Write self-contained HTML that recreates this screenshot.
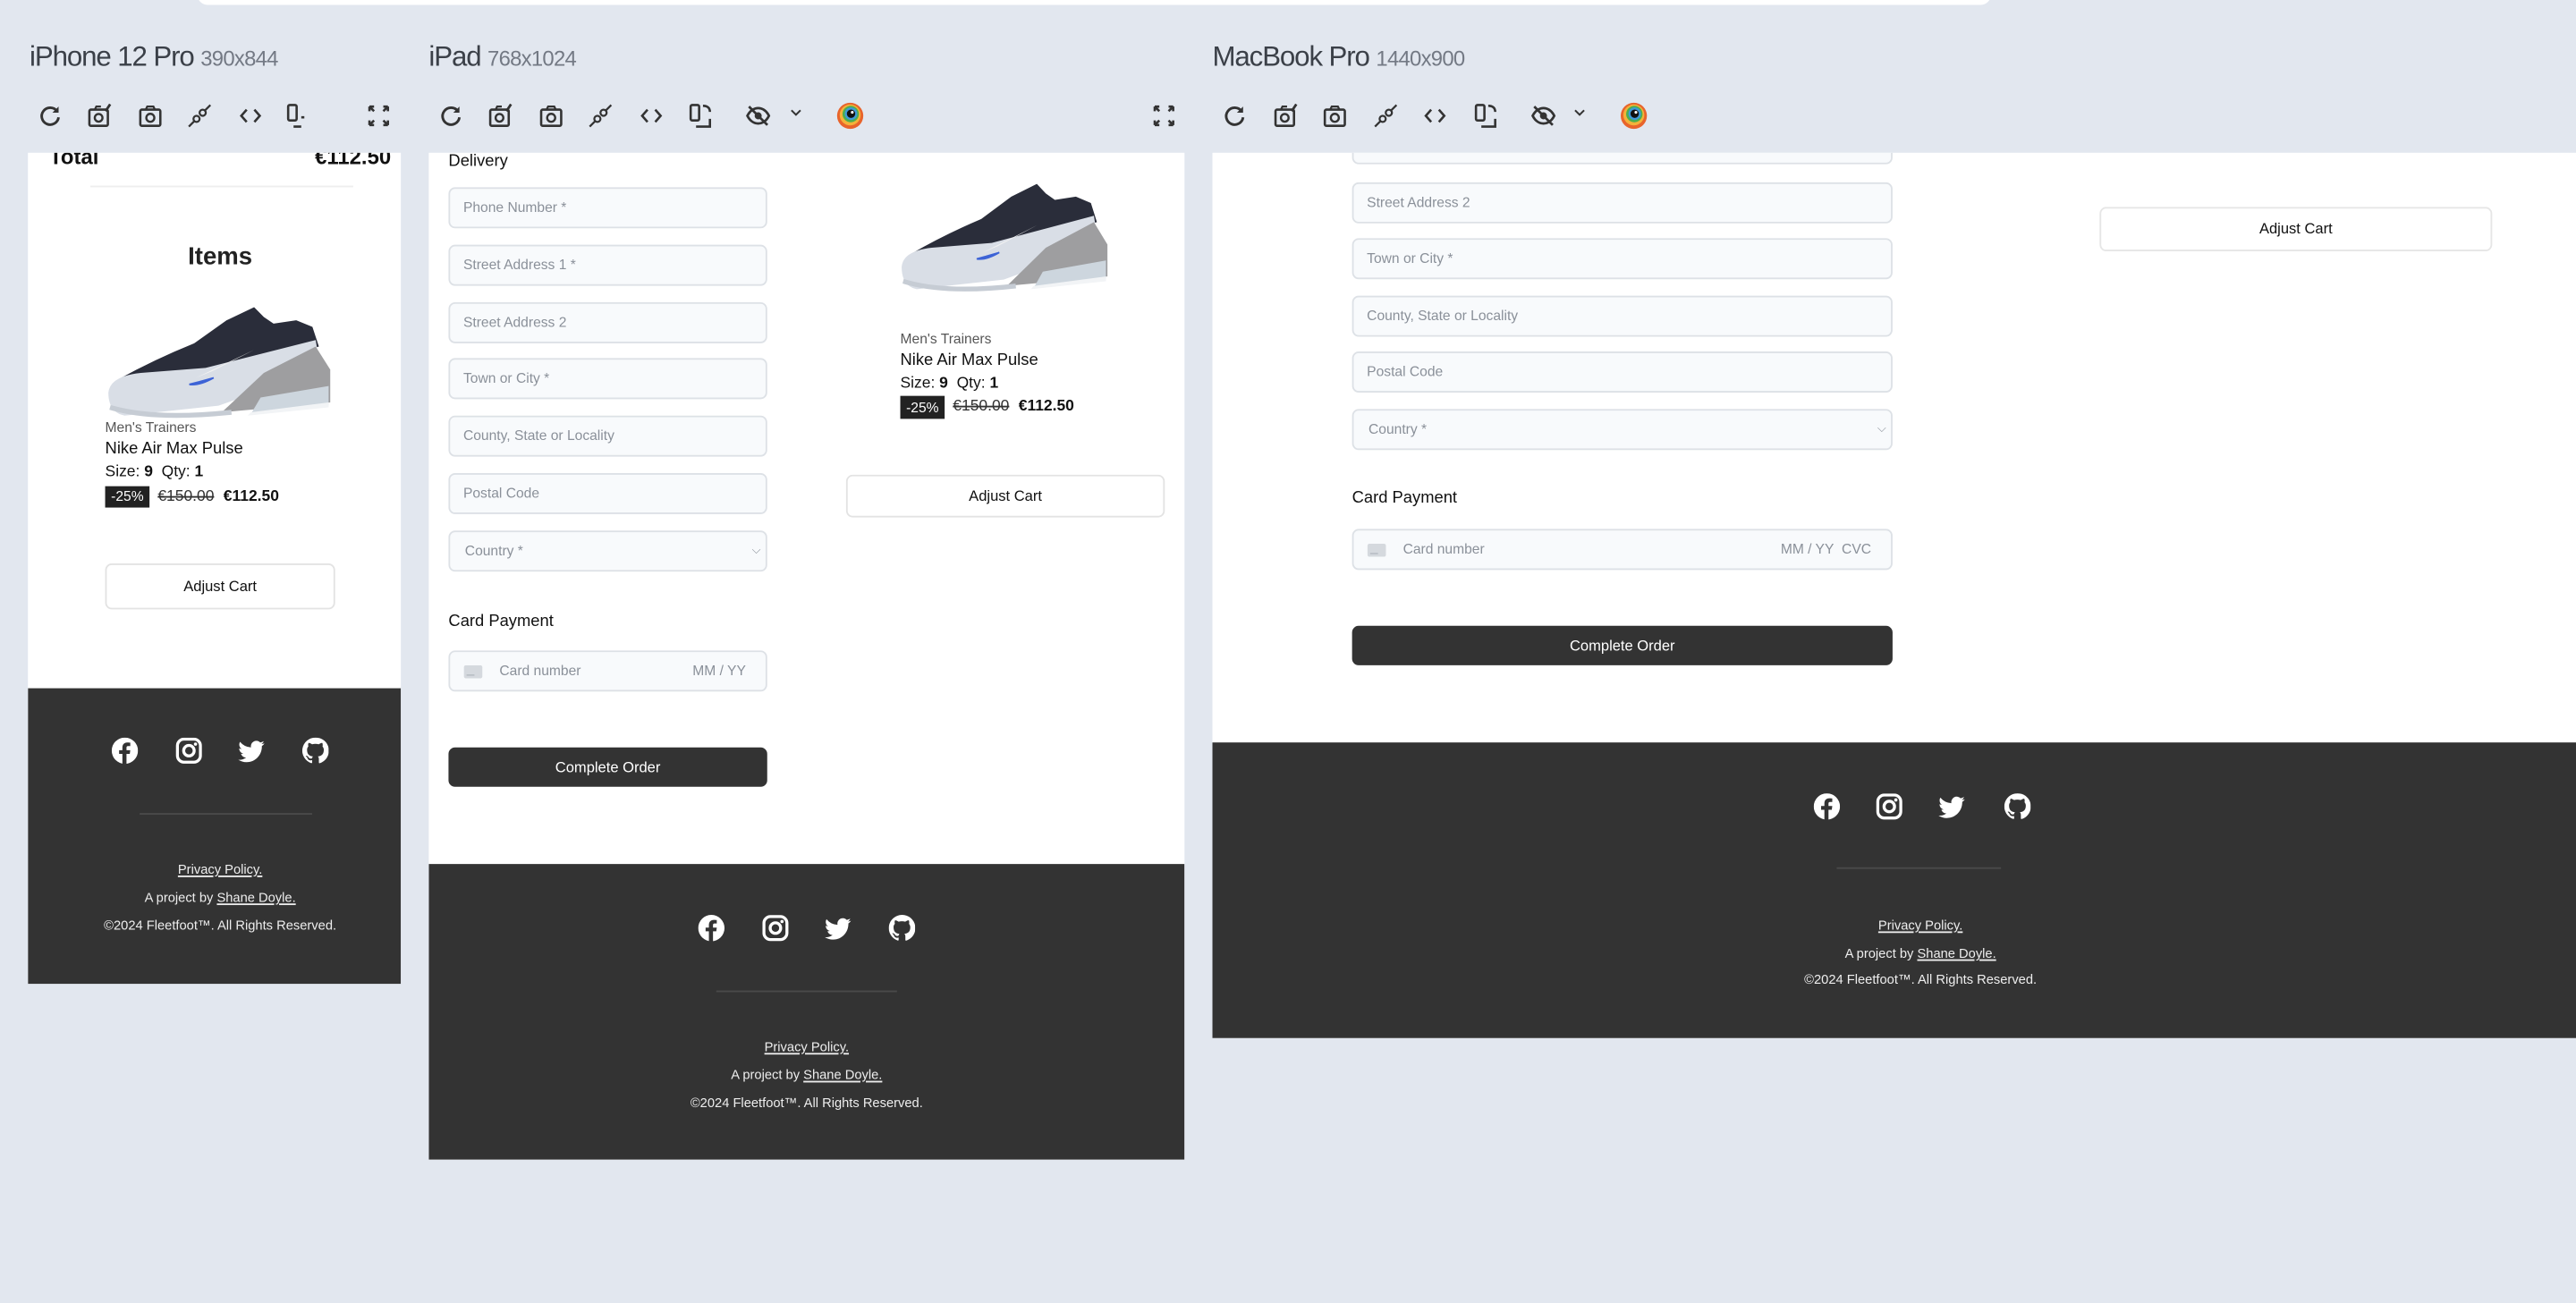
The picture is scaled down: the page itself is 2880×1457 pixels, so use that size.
<!DOCTYPE html>
<html><head><meta charset="utf-8">
<style>
*{margin:0;padding:0;box-sizing:border-box}
html,body{width:2880px;height:1456px;overflow:hidden;background:#e2e7ef}
#s{position:absolute;left:0;top:0;width:1568px;height:793px;transform:scale(1.836735);transform-origin:0 0;font-family:"Liberation Sans",sans-serif}
.a{position:absolute}
.t{font-size:17px;color:#3b4048;letter-spacing:-0.6px;white-space:nowrap}
.t span{font-size:13px;color:#737984;letter-spacing:-0.4px}
.ic{position:absolute;width:15px;height:15px;top:62px}
.fr{position:absolute;background:#fff;overflow:hidden}
.ft{position:absolute;left:0;right:0;bottom:0;background:#333}
.in{position:absolute;height:25px;border:1px solid #dde1e6;border-radius:4px;background:#f8fafc;font-size:8.5px;color:#8a9099;padding-left:8px;line-height:23px}
.btn{position:absolute;border-radius:4px;font-size:9px;text-align:center}
.lbl{position:absolute;font-size:10px;color:#111}
.ftx{position:absolute;width:200px;text-align:center;font-size:8px;color:#eee}
.ftx u{text-decoration:underline}
.fi{position:absolute;width:16px;height:16px}
.line{position:absolute;height:1px;background:#4a4a4a}
</style></head><body>
<svg width="0" height="0" style="position:absolute">
<defs>
<symbol id="rel" viewBox="0 0 16 16"><path d="M12.5 5A5.5 5.5 0 1 0 13.5 9" fill="none" stroke="#333" stroke-width="1.7"/><path d="M13.5 2v4h-4z" fill="#333"/></symbol>
<symbol id="cam2" viewBox="0 0 16 16"><rect x="1.5" y="4" width="12" height="10.5" rx="1" fill="none" stroke="#333" stroke-width="1.5"/><circle cx="7.5" cy="9.3" r="2.5" fill="none" stroke="#333" stroke-width="1.4"/><path d="M5 4l1-2h3" fill="none" stroke="#333" stroke-width="1.3"/><path d="M12 5L15 .5" stroke="#333" stroke-width="1.6"/></symbol>
<symbol id="cam" viewBox="0 0 16 16"><rect x="1.5" y="4" width="13" height="10.5" rx="1" fill="none" stroke="#333" stroke-width="1.5"/><circle cx="8" cy="9.3" r="2.6" fill="none" stroke="#333" stroke-width="1.4"/><path d="M5 4l1-2h4l1 2" fill="none" stroke="#333" stroke-width="1.3"/></symbol>
<symbol id="plug" viewBox="0 0 16 16"><path d="M1 15l4-4M15 1l-4 4" stroke="#333" stroke-width="1.3"/><circle cx="6" cy="10" r="2" fill="none" stroke="#333" stroke-width="1.3"/><circle cx="10" cy="6" r="2" fill="none" stroke="#333" stroke-width="1.3"/></symbol>
<symbol id="code" viewBox="0 0 16 16"><path d="M5.5 4L2 8l3.5 4M10.5 4L14 8l-3.5 4" fill="none" stroke="#333" stroke-width="1.5"/></symbol>
<symbol id="rot" viewBox="0 0 16 16"><rect x="1.5" y="1" width="5.5" height="10" rx="1" fill="none" stroke="#333" stroke-width="1.5"/><path d="M9.5 1.5c3 0 4.5 1.5 4.5 4M5 15h9v-5" fill="none" stroke="#333" stroke-width="1.5"/></symbol>
<symbol id="rot2" viewBox="0 0 16 16"><rect x="1.5" y="1" width="5.5" height="10" rx="1" fill="none" stroke="#333" stroke-width="1.5"/><path d="M5 15h5M10 9h2" fill="none" stroke="#333" stroke-width="1.5"/></symbol>
<symbol id="full" viewBox="0 0 16 16"><path d="M2 2h3M2 2v3M2 2l3 3M14 2h-3M14 2v3M14 2l-3 3M2 14h3M2 14v-3M2 14l3-3M14 14h-3M14 14v-3M14 14l-3-3" stroke="#333" stroke-width="1.5" fill="none"/></symbol>
<symbol id="eye" viewBox="0 0 16 16"><path d="M1 8c2-4 5-5 7-5s5 1 7 5c-2 4-5 5-7 5S3 12 1 8z" fill="none" stroke="#333" stroke-width="1.6"/><circle cx="8" cy="8" r="2.3" fill="#333"/><path d="M2 2l12 12" stroke="#333" stroke-width="1.6"/></symbol>
<symbol id="chev" viewBox="0 0 16 16"><path d="M4 6l4 4 4-4" fill="none" stroke="#333" stroke-width="1.6"/></symbol>
<symbol id="poly" viewBox="0 0 16 16"><circle cx="8" cy="8" r="7.5" fill="#e8642c"/><circle cx="8" cy="7.5" r="6" fill="#f3b23a"/><circle cx="8.3" cy="7" r="4.7" fill="#4cae4f"/><circle cx="8.5" cy="6.8" r="3.6" fill="#3e9ad8"/><circle cx="8.5" cy="6.8" r="2.4" fill="#111"/><circle cx="9.2" cy="6" r=".8" fill="#fff"/></symbol>
<symbol id="fb" viewBox="0 0 16 16"><circle cx="8" cy="8" r="8" fill="#fff"/><path d="M9 16V10h2l.3-2.3H9V6.3c0-.7.2-1.1 1.1-1.1h1.2V3.1c-.2 0-1-.1-1.8-.1-1.8 0-3 1.1-3 3.1v1.6H4.5V10h2v6z" fill="#333"/></symbol>
<symbol id="ig" viewBox="0 0 16 16"><rect x="1" y="1" width="14" height="14" rx="4" fill="none" stroke="#fff" stroke-width="1.8"/><circle cx="8" cy="8" r="3.2" fill="none" stroke="#fff" stroke-width="1.8"/><circle cx="12" cy="4" r="1" fill="#fff"/></symbol>
<symbol id="tw" viewBox="0 0 16 16"><path d="M16 3.5c-.6.3-1.2.4-1.9.5.7-.4 1.2-1 1.4-1.8-.6.4-1.3.6-2.1.8A3.3 3.3 0 0 0 7.8 6 9.3 9.3 0 0 1 1.1 2.6a3.3 3.3 0 0 0 1 4.4c-.5 0-1-.2-1.5-.4 0 1.600 1.1 2.9 2.6 3.2-.5.1-1 .2-1.5.1.4 1.3 1.6 2.3 3.1 2.3A6.6 6.6 0 0 1 0 13.5 9.3 9.3 0 0 0 5 15c6 0 9.4-5 9.4-9.4v-.4c.7-.5 1.2-1 1.6-1.7z" fill="#fff"/></symbol>
<symbol id="gh" viewBox="0 0 16 16"><path d="M8 0a8 8 0 0 0-2.5 15.6c.4 0 .5-.2.5-.4v-1.4c-2.200.5-2.7-1-2.7-1-.4-.9-.9-1.2-.9-1.2-.7-.5.1-.5.1-.5.8.1 1.2.8 1.2.8.7 1.3 1.900.9 2.300.7 0-.5.3-.9.5-1.1-1.8-.2-3.6-.9-3.6-4 0-.9.3-1.6.8-2.1 0-.2-.4-1 .1-2.1 0 0 .7-.2 2.2.8a7.5 7.5 0 0 1 4 0c1.5-1 2.2-.8 2.2-.8.4 1.1.2 1.9.1 2.1.5.6.8 1.3.8 2.1 0 3.1-1.9 3.8-3.6 4 .3.3.6.8.6 1.5v2.2c0 .2.1.5.6.4A8 8 0 0 0 8 0z" fill="#fff"/></symbol>
<symbol id="shoe" viewBox="0 0 140 70" preserveAspectRatio="none">
<path d="M8 46Q30 34 55 24L75 10 92 2 98 8 104 12 118 10 128 14 132 26 60 46z" fill="#2a2d3a"/>
<path d="M2 54Q3 44 22 42L62 39 130 22 133 40 70 62 12 68Q2 66 2 54z" fill="#d9dee6"/>
<path d="M72 66L98 42 130 26 139 40 139 60z" fill="#9e9ea0"/>
<path d="M96 57L138 50 138 62 90 67z" fill="#cdd6de"/>
<path d="M90 66L138 60 138 63 88 68z" fill="#f2f4f6"/>
<path d="M56 45L92 28 66 41z" fill="#f2f2f2"/>
<path d="M52 49Q58 50 67 45L58 47.5z" fill="#3d63d6" stroke="#3d63d6"/>
<path d="M3 63Q30 71 78 66" stroke="#c6ccd4" stroke-width="3" fill="none"/>
</symbol>
<symbol id="card" viewBox="0 0 14 10"><rect width="14" height="10" rx="1.5" fill="#d5d9de"/><rect x="2" y="7" width="6" height="1" fill="#b6bbc2"/></symbol>
</defs></svg>

<div id="s">
<div class="a" style="left:120px;top:-10px;width:1092px;height:13px;background:#fff;border-radius:8px"></div>

<div class="a t" style="left:18px;top:25px">iPhone 12 Pro <span>390x844</span></div>
<div class="a t" style="left:261px;top:25px">iPad <span>768x1024</span></div>
<div class="a t" style="left:738px;top:25px">MacBook Pro <span>1440x900</span></div>

<svg class="ic" style="left:23px;top:63px"><use href="#rel"/></svg>
<svg class="ic" style="left:53px;top:63px"><use href="#cam2"/></svg>
<svg class="ic" style="left:84px;top:63px"><use href="#cam"/></svg>
<svg class="ic" style="left:114px;top:63px"><use href="#plug"/></svg>
<svg class="ic" style="left:145px;top:63px"><use href="#code"/></svg>
<svg class="ic" style="left:174px;top:63px"><use href="#rot2"/></svg>
<svg class="ic" style="left:223px;top:63px"><use href="#full"/></svg>

<svg class="ic" style="left:267px;top:63px"><use href="#rel"/></svg>
<svg class="ic" style="left:297px;top:63px"><use href="#cam2"/></svg>
<svg class="ic" style="left:328px;top:63px"><use href="#cam"/></svg>
<svg class="ic" style="left:358px;top:63px"><use href="#plug"/></svg>
<svg class="ic" style="left:389px;top:63px"><use href="#code"/></svg>
<svg class="ic" style="left:419px;top:63px"><use href="#rot"/></svg>
<svg class="ic" style="left:454px;top:63px"><use href="#eye"/></svg>
<svg class="ic" style="left:479px;width:11px;height:11px;top:63px"><use href="#chev"/></svg>
<svg class="ic" style="left:509px;width:17px;height:17px;top:62px"><use href="#poly"/></svg>
<svg class="ic" style="left:701px;top:63px"><use href="#full"/></svg>

<svg class="ic" style="left:744px;top:63px"><use href="#rel"/></svg>
<svg class="ic" style="left:775px;top:63px"><use href="#cam2"/></svg>
<svg class="ic" style="left:805px;top:63px"><use href="#cam"/></svg>
<svg class="ic" style="left:836px;top:63px"><use href="#plug"/></svg>
<svg class="ic" style="left:866px;top:63px"><use href="#code"/></svg>
<svg class="ic" style="left:897px;top:63px"><use href="#rot"/></svg>
<svg class="ic" style="left:932px;top:63px"><use href="#eye"/></svg>
<svg class="ic" style="left:956px;width:11px;height:11px;top:63px"><use href="#chev"/></svg>
<svg class="ic" style="left:986px;width:17px;height:17px;top:62px"><use href="#poly"/></svg>

<!-- iPhone -->
<div class="fr" style="left:17px;top:93px;width:227px;height:506px">
 <div class="a" style="left:13px;top:-5px;font-size:13px;font-weight:bold;color:#111">Total</div>
 <div class="a" style="right:6px;top:-5px;font-size:13px;font-weight:bold;color:#111">€112.50</div>
 <div class="a" style="left:38px;top:20px;width:160px;height:1px;background:#eee"></div>
 <div class="a" style="left:0;width:234px;top:55px;text-align:center;font-size:15px;font-weight:bold;color:#222">Items</div>
 <svg class="a" style="left:47px;top:92px;width:138px;height:70px"><use href="#shoe"/></svg>
 <div class="a" style="left:47px;top:162px;font-size:8.5px;color:#555">Men's Trainers</div>
 <div class="a" style="left:47px;top:175px;font-size:10px;color:#111">Nike Air Max Pulse</div>
 <div class="a" style="left:47px;top:189px;font-size:9.5px;color:#111">Size: <b>9</b>&nbsp; Qty: <b>1</b></div>
 <div class="a" style="left:47px;top:203px;width:27px;height:13px;background:#222;color:#fff;font-size:8.5px;text-align:center;line-height:13px">-25%</div>
 <div class="a" style="left:79px;top:203px;font-size:9.5px;color:#333;text-decoration:line-through;line-height:13px">€150.00</div>
 <div class="a" style="left:119px;top:203px;font-size:9.5px;font-weight:bold;color:#111;line-height:13px">€112.50</div>
 <div class="btn" style="left:47px;top:250px;width:140px;height:28px;border:1px solid #e3e3e3;line-height:26px;color:#111">Adjust Cart</div>
 <div class="ft" style="top:326px">
  <svg class="fi" style="left:51px;top:30px"><use href="#fb"/></svg>
  <svg class="fi" style="left:90px;top:30px"><use href="#ig"/></svg>
  <svg class="fi" style="left:128px;top:30px"><use href="#tw"/></svg>
  <svg class="fi" style="left:167px;top:30px"><use href="#gh"/></svg>
  <div class="line" style="left:68px;top:76px;width:105px"></div>
  <div class="ftx" style="left:17px;top:106px"><u>Privacy Policy.</u></div>
  <div class="ftx" style="left:17px;top:123px">A project by <u>Shane Doyle.</u></div>
  <div class="ftx" style="left:17px;top:140px">©2024 Fleetfoot™. All Rights Reserved.</div>
 </div>
</div>

<!-- iPad -->
<div class="fr" style="left:261px;top:93px;width:460px;height:613px">
 <div class="lbl" style="left:12px;top:0px">Delivery</div>
 <div class="in" style="left:12px;top:21px;width:194px">Phone Number *</div>
 <div class="in" style="left:12px;top:56px;width:194px">Street Address 1 *</div>
 <div class="in" style="left:12px;top:91px;width:194px">Street Address 2</div>
 <div class="in" style="left:12px;top:125px;width:194px">Town or City *</div>
 <div class="in" style="left:12px;top:160px;width:194px">County, State or Locality</div>
 <div class="in" style="left:12px;top:195px;width:194px">Postal Code</div>
 <div class="in" style="left:12px;top:230px;width:194px;padding-left:9px">Country *<span style="position:absolute;right:3px;font-size:7px">⌵</span></div>
 <div class="lbl" style="left:12px;top:280px">Card Payment</div>
 <div class="in" style="left:12px;top:303px;width:194px"><svg style="position:absolute;left:8px;top:8px;width:12px;height:8px"><use href="#card"/></svg><span style="position:absolute;left:30px">Card number</span><span style="position:absolute;right:12px">MM / YY</span></div>
 <div class="btn" style="left:12px;top:362px;width:194px;height:24px;background:#333;color:#fff;line-height:24px">Complete Order</div>
 <svg class="a" style="left:286px;top:17px;width:128px;height:68px"><use href="#shoe"/></svg>
 <div class="a" style="left:287px;top:108px;font-size:8.5px;color:#555">Men's Trainers</div>
 <div class="a" style="left:287px;top:121px;font-size:10px;color:#111">Nike Air Max Pulse</div>
 <div class="a" style="left:287px;top:135px;font-size:9.5px;color:#111">Size: <b>9</b>&nbsp; Qty: <b>1</b></div>
 <div class="a" style="left:287px;top:148px;width:27px;height:14px;background:#222;color:#fff;font-size:8.5px;text-align:center;line-height:14px">-25%</div>
 <div class="a" style="left:319px;top:148px;font-size:9.5px;color:#333;text-decoration:line-through;line-height:14px">€150.00</div>
 <div class="a" style="left:359px;top:148px;font-size:9.5px;font-weight:bold;color:#111;line-height:14px">€112.50</div>
 <div class="btn" style="left:254px;top:196px;width:194px;height:26px;border:1px solid #e3e3e3;line-height:24px;color:#111">Adjust Cart</div>
 <div class="ft" style="top:433px">
  <svg class="fi" style="left:164px;top:31px"><use href="#fb"/></svg>
  <svg class="fi" style="left:203px;top:31px"><use href="#ig"/></svg>
  <svg class="fi" style="left:241px;top:31px"><use href="#tw"/></svg>
  <svg class="fi" style="left:280px;top:31px"><use href="#gh"/></svg>
  <div class="line" style="left:175px;top:77px;width:110px"></div>
  <div class="ftx" style="left:130px;top:107px"><u>Privacy Policy.</u></div>
  <div class="ftx" style="left:130px;top:124px">A project by <u>Shane Doyle.</u></div>
  <div class="ftx" style="left:130px;top:141px">©2024 Fleetfoot™. All Rights Reserved.</div>
 </div>
</div>

<!-- MacBook -->
<div class="fr" style="left:738px;top:93px;width:830px;height:539px">
 <div class="in" style="left:85px;top:-18px;width:329px"></div>
 <div class="in" style="left:85px;top:18px;width:329px">Street Address 2</div>
 <div class="in" style="left:85px;top:52px;width:329px">Town or City *</div>
 <div class="in" style="left:85px;top:87px;width:329px">County, State or Locality</div>
 <div class="in" style="left:85px;top:121px;width:329px">Postal Code</div>
 <div class="in" style="left:85px;top:156px;width:329px;padding-left:9px">Country *<span style="position:absolute;right:3px;font-size:7px">⌵</span></div>
 <div class="lbl" style="left:85px;top:205px">Card Payment</div>
 <div class="in" style="left:85px;top:229px;width:329px"><svg style="position:absolute;left:8px;top:8px;width:12px;height:8px"><use href="#card"/></svg><span style="position:absolute;left:30px">Card number</span><span style="position:absolute;right:12px">MM / YY&nbsp; CVC</span></div>
 <div class="btn" style="left:85px;top:288px;width:329px;height:24px;background:#333;color:#fff;line-height:24px">Complete Order</div>
 <div class="btn" style="left:540px;top:33px;width:239px;height:27px;border:1px solid #e6e6e6;line-height:25px;color:#111">Adjust Cart</div>
 <div class="ft" style="top:359px">
  <svg class="fi" style="left:366px;top:31px"><use href="#fb"/></svg>
  <svg class="fi" style="left:404px;top:31px"><use href="#ig"/></svg>
  <svg class="fi" style="left:442px;top:31px"><use href="#tw"/></svg>
  <svg class="fi" style="left:482px;top:31px"><use href="#gh"/></svg>
  <div class="line" style="left:380px;top:76px;width:100px"></div>
  <div class="ftx" style="left:331px;top:107px"><u>Privacy Policy.</u></div>
  <div class="ftx" style="left:331px;top:124px">A project by <u>Shane Doyle.</u></div>
  <div class="ftx" style="left:331px;top:140px">©2024 Fleetfoot™. All Rights Reserved.</div>
 </div>
</div>
</div>
</body></html>
